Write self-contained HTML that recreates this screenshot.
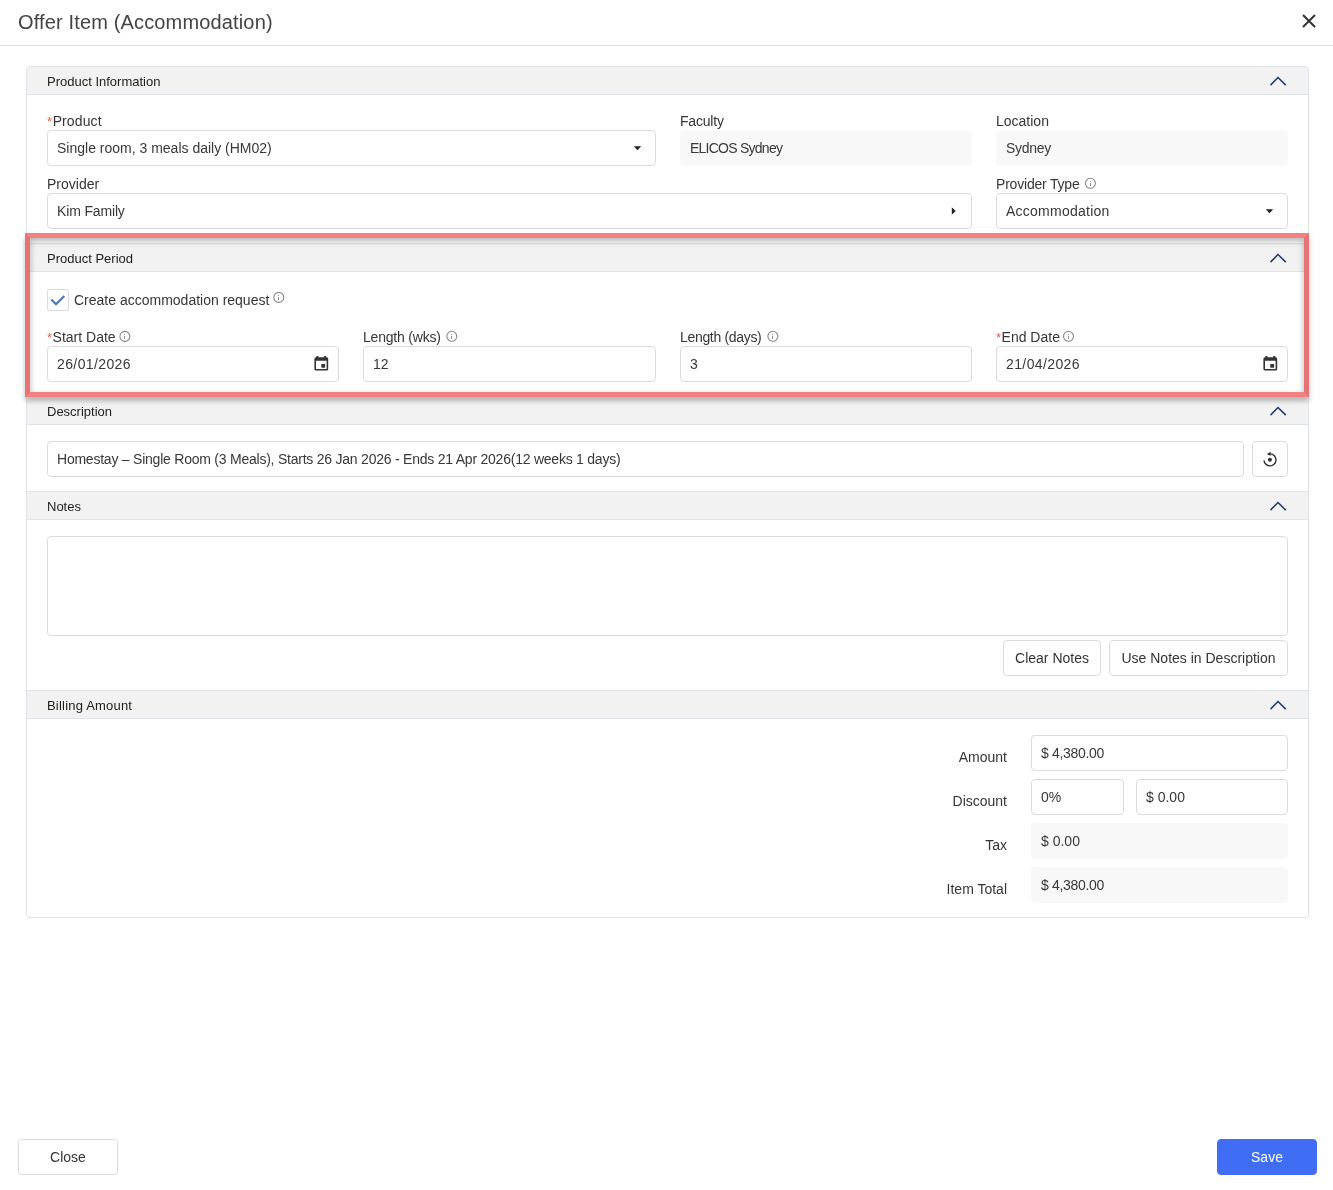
<!DOCTYPE html>
<html><head><meta charset="utf-8">
<style>
*{box-sizing:border-box;margin:0;padding:0}
html,body{width:1333px;height:1190px;overflow:hidden;background:#fff}
body{-webkit-font-smoothing:antialiased;filter:opacity(1)}
body{font-family:"Liberation Sans",sans-serif;color:#333;position:relative}
.a{position:absolute}
.title{left:18px;top:10px;font-size:20px;letter-spacing:0.15px;line-height:24px;color:#444;white-space:nowrap}
.hdrline{left:0;top:45px;width:1333px;height:1px;background:#dedede}
.card{left:26px;top:66px;width:1283px;height:852px;border:1px solid #dfe3e8;border-radius:4px;overflow:hidden}
.sh{position:absolute;left:0;width:1281px;height:28px;background:#f2f2f2;border-bottom:1px solid #dfe3e8}
.sh.t{border-top:1px solid #dfe3e8}
.sh span{position:absolute;left:20px;top:7px;font-size:13px;line-height:16px;color:#222;white-space:nowrap}
.chev{position:absolute;left:1243px;top:9px;width:16px;height:10px}
.lbl{font-size:14px;line-height:16px;color:#363636;white-space:nowrap}
.req{color:#e85d45;font-size:13px;position:relative;top:0;margin-right:0.5px}
.inp{height:36px;border:1px solid #dcdcdc;border-radius:4px;background:#fff;font-size:14px;line-height:34px;padding-left:9px;color:#383838;white-space:nowrap}
.ro{border-color:#f8f8f8;background:#f8f8f8}
.info{display:inline-block;vertical-align:top}
.btn{height:36px;border:1px solid #dcdcdc;border-radius:4px;background:#fff;font-size:14px;line-height:34px;text-align:center;color:#333;white-space:nowrap}
</style></head><body>
<div class="a title">Offer Item (Accommodation)</div>
<svg class="a" style="left:1301px;top:13px" width="16" height="16" viewBox="0 0 16 16"><path d="M2 2L14 14M14 2L2 14" stroke="#333" stroke-width="2" fill="none"/></svg>
<div class="a hdrline"></div>

<div class="a card">
  <!-- Product Information header -->
  <div class="sh" style="top:0"><span>Product Information</span>
    <svg class="chev" viewBox="0 0 16 10"><path d="M0.5 9.1L8 1.5L15.7 9.1" stroke="#1f3a6e" stroke-width="1.5" fill="none"/></svg></div>
</div>

<!-- Product info body (absolute, page coords) -->
<div class="a lbl" style="left:47px;top:113px;letter-spacing:0.1px"><span class="req">*</span>Product</div>
<div class="a inp" style="left:47px;top:130px;width:609px">Single room, 3 meals daily (HM02)</div>
<div class="a lbl" style="left:680px;top:113px;letter-spacing:-0.2px">Faculty</div>
<div class="a inp ro" style="left:680px;top:130px;width:292px;letter-spacing:-0.75px">ELICOS Sydney</div>
<div class="a lbl" style="left:996px;top:113px">Location</div>
<div class="a inp ro" style="left:996px;top:130px;width:292px;letter-spacing:-0.28px">Sydney</div>

<div class="a lbl" style="left:47px;top:176px">Provider</div>
<div class="a inp" style="left:47px;top:193px;width:925px;letter-spacing:-0.15px">Kim Family</div>
<div class="a lbl" style="left:996px;top:176px;letter-spacing:-0.2px">Provider Type</div>
<div class="a inp" style="left:996px;top:193px;width:292px;letter-spacing:0.25px">Accommodation</div>


<!-- Product Period -->
<div class="a" style="left:27px;top:243px;width:1281px;height:154px;background:#fff"></div>
<div class="a sh t" style="left:27px;top:243px;height:29px"><span>Product Period</span>
  <svg class="chev" viewBox="0 0 16 10"><path d="M0.5 9.1L8 1.5L15.7 9.1" stroke="#1f3a6e" stroke-width="1.5" fill="none"/></svg></div>
<div class="a" style="left:47px;top:289px;width:22px;height:22px;border:1px solid #dcdcdc;border-radius:2px;background:#fff"></div>
<svg class="a" style="left:47px;top:289px" width="22" height="22" viewBox="0 0 22 22"><path d="M4.3 10.6L9 15.2L17.3 6.9" stroke="#4677b9" stroke-width="2.1" fill="none" stroke-linecap="butt" stroke-linejoin="miter"/></svg>
<div class="a lbl" style="left:74px;top:292px">Create accommodation request</div>

<div class="a lbl" style="left:47px;top:329px"><span class="req">*</span>Start Date</div>
<div class="a inp" style="left:47px;top:346px;width:292px;letter-spacing:0.39px">26/01/2026</div>
<div class="a lbl" style="left:363px;top:329px;letter-spacing:-0.2px">Length (wks)</div>
<div class="a inp" style="left:363px;top:346px;width:293px">12</div>
<div class="a lbl" style="left:680px;top:329px;letter-spacing:-0.32px">Length (days)</div>
<div class="a inp" style="left:680px;top:346px;width:292px">3</div>
<div class="a lbl" style="left:996px;top:329px"><span class="req">*</span>End Date</div>
<div class="a inp" style="left:996px;top:346px;width:292px;letter-spacing:0.39px">21/04/2026</div>

<!-- Description -->
<div class="a sh t" style="left:27px;top:396px;height:29px"><span>Description</span>
  <svg class="chev" viewBox="0 0 16 10"><path d="M0.5 9.1L8 1.5L15.7 9.1" stroke="#1f3a6e" stroke-width="1.5" fill="none"/></svg></div>
<div class="a inp" style="left:47px;top:441px;width:1197px;letter-spacing:-0.23px">Homestay – Single Room (3 Meals), Starts 26 Jan 2026 - Ends 21 Apr 2026(12 weeks 1 days)</div>
<div class="a btn" style="left:1252px;top:441px;width:36px"></div>

<!-- Notes -->
<div class="a sh t" style="left:27px;top:491px;height:29px"><span>Notes</span>
  <svg class="chev" viewBox="0 0 16 10"><path d="M0.5 9.1L8 1.5L15.7 9.1" stroke="#1f3a6e" stroke-width="1.5" fill="none"/></svg></div>
<div class="a inp" style="left:47px;top:536px;width:1241px;height:100px"></div>
<div class="a btn" style="left:1003px;top:640px;width:98px">Clear Notes</div>
<div class="a btn" style="left:1109px;top:640px;width:179px">Use Notes in Description</div>

<!-- Billing -->
<div class="a sh t" style="left:27px;top:690px;height:29px"><span style="letter-spacing:0.2px">Billing Amount</span>
  <svg class="chev" viewBox="0 0 16 10"><path d="M0.5 9.1L8 1.5L15.7 9.1" stroke="#1f3a6e" stroke-width="1.5" fill="none"/></svg></div>
<div class="a lbl" style="left:900px;width:107px;text-align:right;top:749px">Amount</div>
<div class="a inp" style="left:1031px;top:735px;width:257px;letter-spacing:-0.33px">$ 4,380.00</div>
<div class="a lbl" style="left:900px;width:107px;text-align:right;top:793px">Discount</div>
<div class="a inp" style="left:1031px;top:779px;width:93px">0%</div>
<div class="a inp" style="left:1136px;top:779px;width:152px">$ 0.00</div>
<div class="a lbl" style="left:900px;width:107px;text-align:right;top:837px">Tax</div>
<div class="a inp ro" style="left:1031px;top:823px;width:257px">$ 0.00</div>
<div class="a lbl" style="left:900px;width:107px;text-align:right;top:881px">Item Total</div>
<div class="a inp ro" style="left:1031px;top:867px;width:257px;letter-spacing:-0.33px">$ 4,380.00</div>


<svg class="a" style="left:0;top:0" width="1333" height="1190" viewBox="0 0 1333 1190">
  <g fill="#222">
    <path d="M633.8 146.2H641.2L637.5 150.2Z"/>
    <path d="M1265.8 209.2H1273.2L1269.5 213.2Z"/>
    <path d="M951.8 207.3V214.7L955.7 211Z"/>
  </g>
  <g fill="none" stroke="#888" stroke-width="1.1">
    <circle cx="1090.4" cy="183.3" r="5"/>
    <circle cx="278.8" cy="297.4" r="5"/>
    <circle cx="124.9" cy="336.4" r="5"/>
    <circle cx="451.8" cy="336.3" r="5"/>
    <circle cx="772.9" cy="336.3" r="5"/>
    <circle cx="1068.5" cy="336.3" r="5"/>
  </g>
  <g fill="#8f8f8f">
    <rect x="1090" y="181" width="1" height="1"/><rect x="1090" y="183" width="1" height="3"/>
    <rect x="278" y="295" width="1" height="1"/><rect x="278" y="297" width="1" height="3"/>
    <rect x="124" y="334" width="1" height="1"/><rect x="124" y="336" width="1" height="3"/>
    <rect x="451" y="334" width="1" height="1"/><rect x="451" y="336" width="1" height="3"/>
    <rect x="772" y="334" width="1" height="1"/><rect x="772" y="336" width="1" height="3"/>
    <rect x="1068" y="334" width="1" height="1"/><rect x="1068" y="336" width="1" height="3"/>
  </g>
  <g id="cal1" fill="#333">
    <path fill-rule="evenodd" d="M314.4 358.8Q314.4 357.2 316 357.2H326.6Q328.2 357.2 328.2 358.8V369Q328.2 370.6 326.6 370.6H316Q314.4 370.6 314.4 369ZM316 360.8V369H326.6V360.8Z"/>
    <rect x="316.4" y="356" width="2" height="2"/><rect x="324.2" y="356" width="2" height="2"/>
    <rect x="321.3" y="364" width="3.8" height="3.7"/>
  </g>
  <use href="#cal1" x="949" y="0"/>
  <g fill="#333">
    <path d="M1264 460.4A6 6 0 1 0 1270.3 453.9" fill="none" stroke="#333" stroke-width="1.45"/>
    <path d="M1266.8 453.9L1270.6 451.7V456.1Z"/>
    <circle cx="1269.9" cy="459.8" r="2"/>
  </g>
</svg>
<div class="a" style="left:25px;top:233px;width:1284px;height:164px;border:5px solid #e57474;border-top-color:#f08282;border-bottom-color:#ef8181;box-shadow:0 4px 5px rgba(0,0,0,.26), inset 0 3px 6px rgba(0,0,0,.3)"></div>

<!-- Footer -->
<div class="a btn" style="left:18px;top:1139px;width:100px">Close</div>
<div class="a btn" style="left:1217px;top:1139px;width:100px;background:#3f6ef4;border-color:#3f6ef4;color:#fff">Save</div>

</body></html>
